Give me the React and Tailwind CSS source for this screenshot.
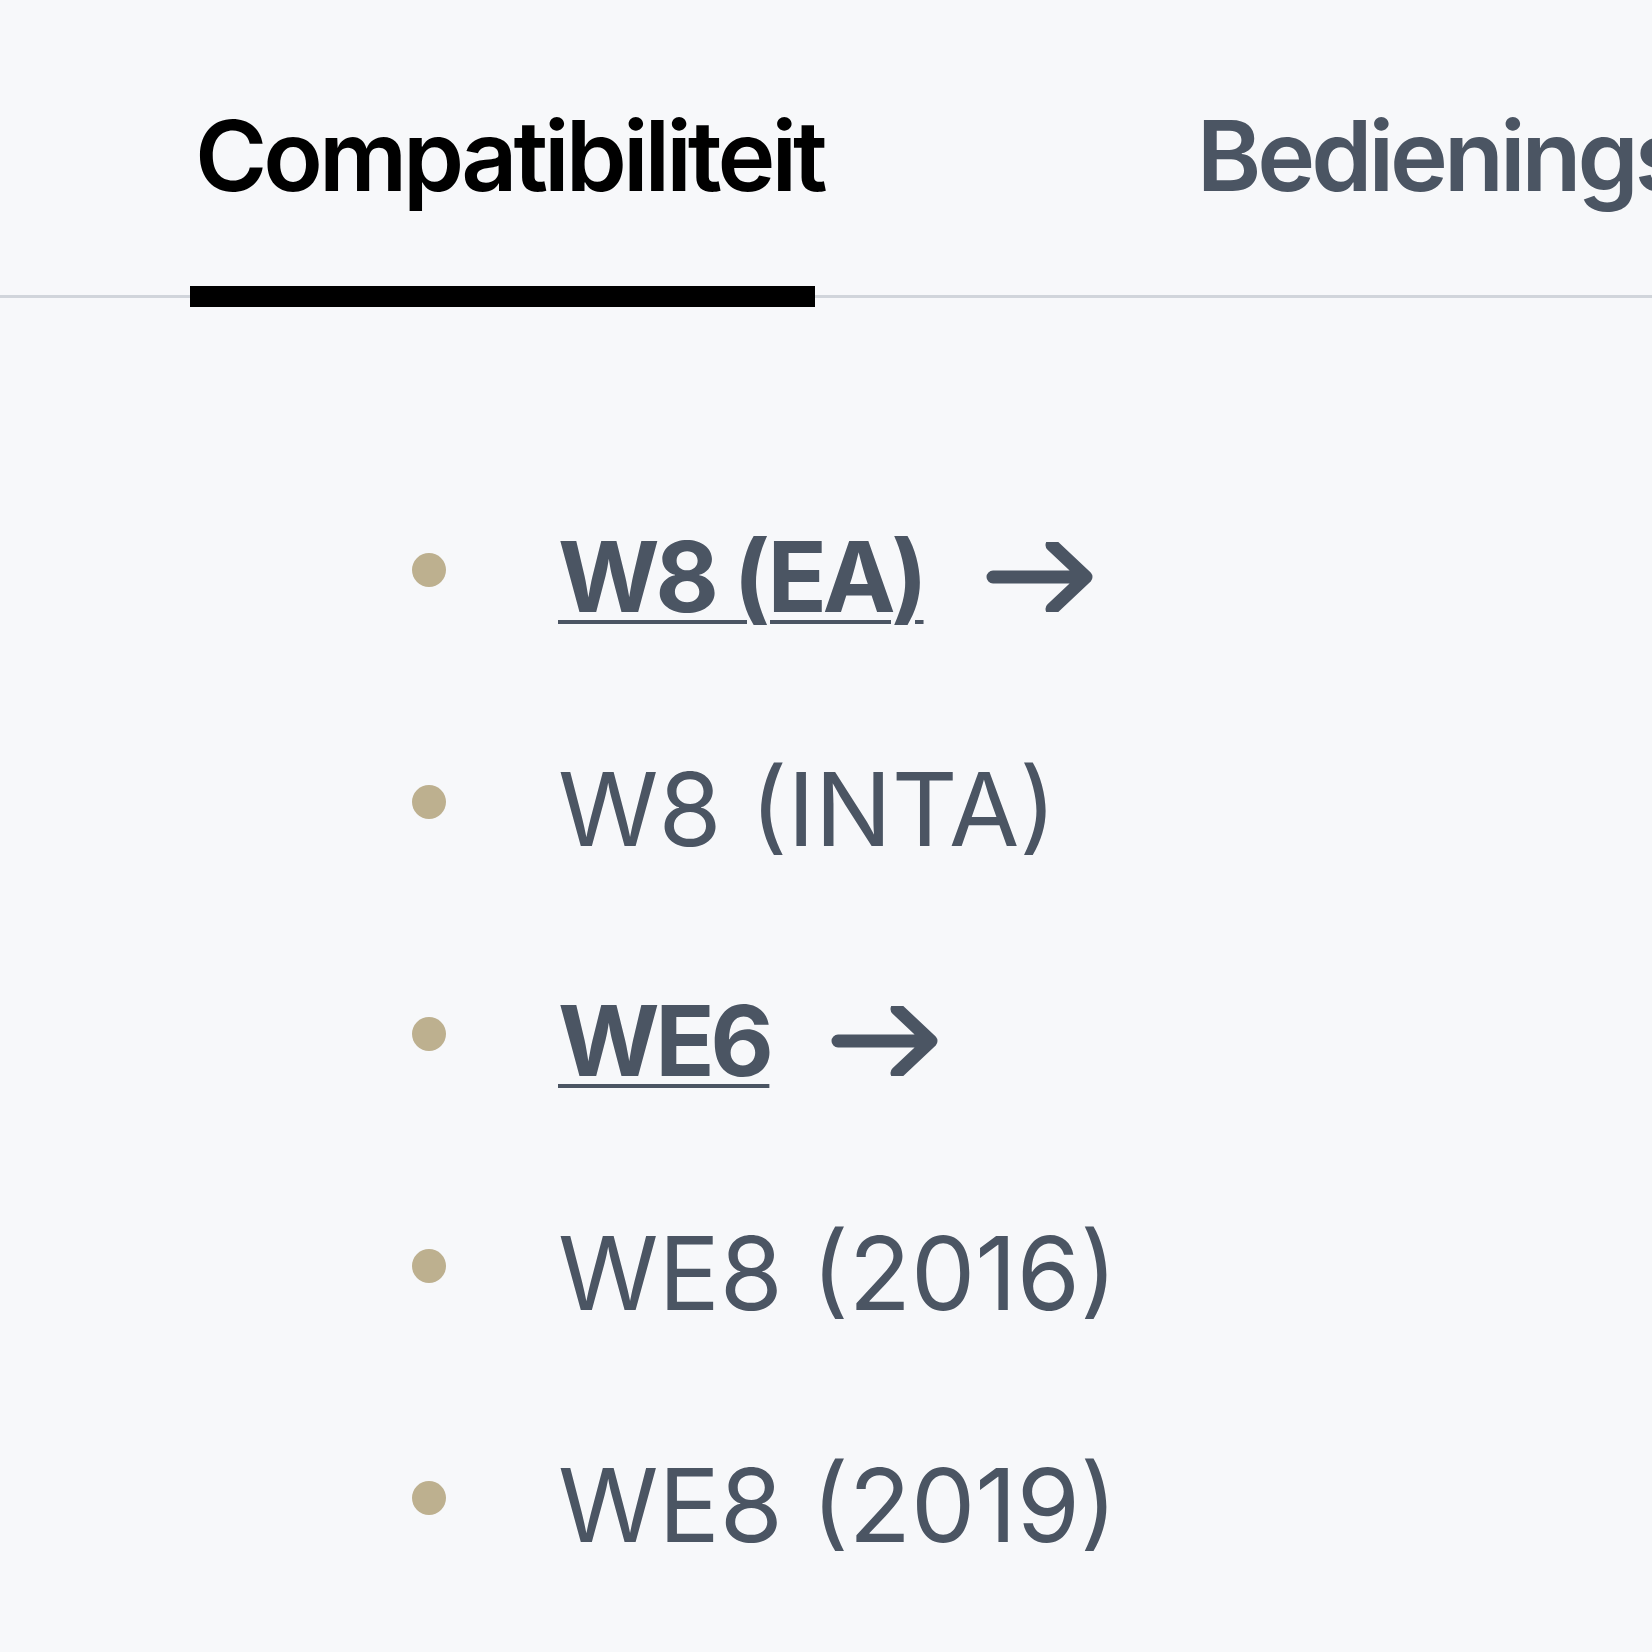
import { Fragment } from 'react';

const items = [
  { label: 'W8 (EA)', link: true },
  { label: 'W8 (INTA)', link: false },
  { label: 'WE6', link: true },
  { label: 'WE8 (2016)', link: false },
  { label: 'WE8 (2019)', link: false },
];

function Arrow() {
  return (
    <svg width="108" height="70" viewBox="0 0 108 70" fill="none" className="shrink-0">
      <path d="M7 35H100M66 3L100 35L66 67" stroke="#4b5563" strokeWidth="13" strokeLinecap="round" strokeLinejoin="round" />
    </svg>
  );
}

export default function App() {
  return (
    <div className="min-h-screen w-full overflow-hidden bg-[#f7f8fa] font-['Inter',sans-serif] whitespace-nowrap">
      {/* Tabs */}
      <div className="flex gap-[373px] border-b-[3px] border-[#d1d5db] pl-[195px] pt-[97px]">
        <div className="relative pb-[80px] text-[98px] font-semibold leading-[1.2] tracking-[-4px] text-black">
          Compatibiliteit
          <span className="absolute -left-[5px] right-[9px] -bottom-[12px] h-[21px] bg-black" />
        </div>
        <div className="pb-[80px] text-[98px] font-semibold leading-[1.2] tracking-[-4px] text-[#4b5563]">
          Bedieningshandleiding
        </div>
      </div>

      {/* List */}
      <ul className="flex flex-col gap-[114px] pl-[412px] pt-[220px]">
        {items.map((item) => (
          <li key={item.label} className="flex items-center leading-[118px] text-[#4b5563]">
            <span className="mr-[112px] mb-[14px] h-[34px] w-[34px] shrink-0 rounded-full bg-[#bdb08f]" />
            {item.link ? (
              <Fragment>
                <a href="#" className="text-[98px] font-bold tracking-[-4.5px] underline decoration-[4px] underline-offset-[8px]">
                  {item.label}
                </a>
                <span className="ml-[62px] flex">
                  <Arrow />
                </span>
              </Fragment>
            ) : (
              <span className="text-[102px]">{item.label}</span>
            )}
          </li>
        ))}
      </ul>
    </div>
  );
}
